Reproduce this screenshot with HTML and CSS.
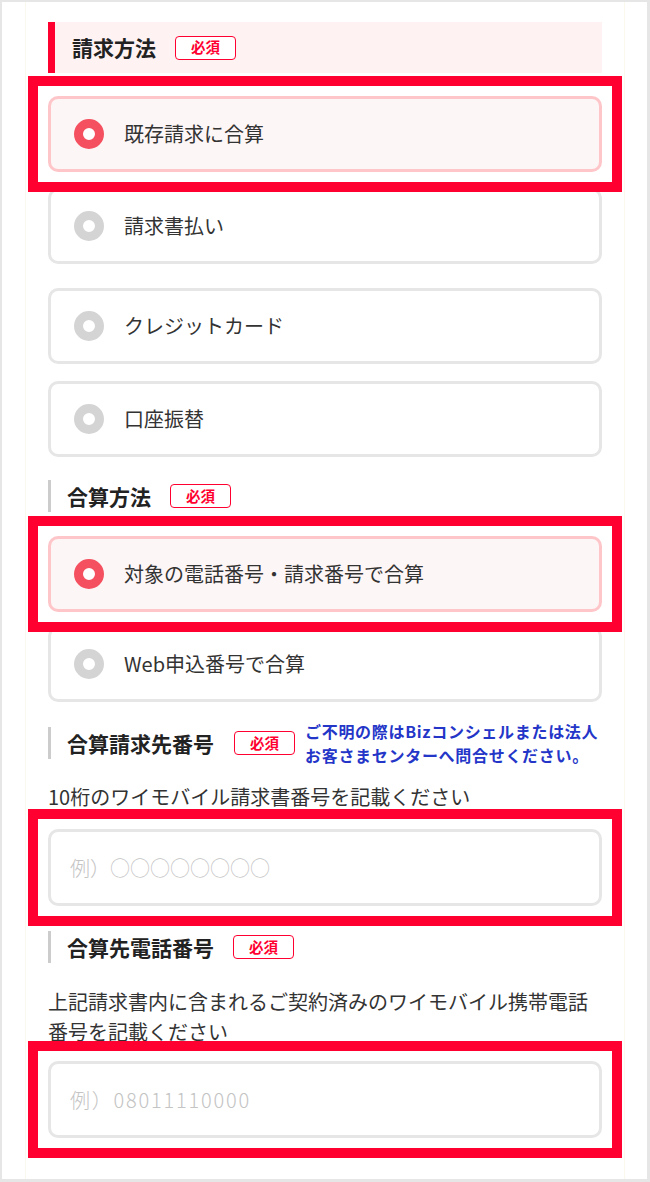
FILE: index.html
```html
<!DOCTYPE html>
<html lang="ja">
<head>
<meta charset="utf-8">
<title>請求方法</title>
<link rel="stylesheet" href="styles.css">
</head>
<body>
<div class="frame">
  <div class="panel">
    <div class="sec-main">
      <h2 class="sec-title">請求方法</h2>
      <span class="badge">必須</span>
    </div>

    <div class="opt opt--checked mark mt-23"><span class="radio"></span><span class="opt-label">既存請求に合算</span></div>
    <div class="opt mt-16"><span class="radio"></span><span class="opt-label">請求書払い</span></div>
    <div class="opt mt-24"><span class="radio"></span><span class="opt-label">クレジットカード</span></div>
    <div class="opt mt-17"><span class="radio"></span><span class="opt-label">口座振替</span></div>

    <div class="sec-sub mt-23">
      <h3 class="sub-title">合算方法</h3>
      <span class="badge">必須</span>
    </div>

    <div class="opt opt--checked mark mt-24"><span class="radio"></span><span class="opt-label">対象の電話番号・請求番号で合算</span></div>
    <div class="opt mt-14"><span class="radio"></span><span class="opt-label">Web申込番号で合算</span></div>

    <div class="sub-row mt-17">
      <h3 class="sub-title sub-title--bar">合算請求先番号</h3>
      <span class="badge">必須</span>
      <p class="note">ご不明の際はBizコンシェルまたは法人<br>お客さまセンターへ問合せください。</p>
    </div>
    <p class="desc mt-15">10桁のワイモバイル請求書番号を記載ください</p>
    <div class="field mark mt-17"><span class="placeholder">例）○○○○○○○○</span></div>

    <div class="sec-sub mt-25">
      <h3 class="sub-title">合算先電話番号</h3>
      <span class="badge">必須</span>
    </div>
    <p class="desc mt-24">上記請求書内に含まれるご契約済みのワイモバイル携帯電話番号を記載ください</p>
    <div class="field mark mt-14"><span class="placeholder placeholder--num">例）08011110000</span></div>
  </div>
</div>
</body>
</html>
```

FILE: styles.css
```css
* { box-sizing: border-box; }

html, body {
  margin: 0;
  padding: 0;
  background: #ffffff;
}

body {
  font-family: "Noto Sans CJK JP", "Noto Sans", sans-serif;
  color: #333333;
}

.frame {
  width: 650px;
  height: 1182px;
  border-style: solid;
  border-color: #e6e6e6;
  border-width: 2px 3px 3px 2px;
  overflow: hidden;
}

.panel {
  margin-left: 23px;
  width: 600px;
  height: 100%;
  border-left: 1px solid #fbf9ee;
  border-right: 1px solid #fbf9ee;
  padding: 20px 22px 0 22px;
}

.mt-14 { margin-top: 14px; }
.mt-15 { margin-top: 15px; }
.mt-16 { margin-top: 16px; }
.mt-17 { margin-top: 17px; }
.mt-23 { margin-top: 23px; }
.mt-24 { margin-top: 24px; }
.mt-25 { margin-top: 25px; }

/* section headers */
.sec-main {
  display: flex;
  align-items: center;
  height: 51px;
  background: #fff2f2;
  border-left: 7px solid #ff0030;
  padding-left: 17px;
}

.sec-title {
  margin: 0;
  font-size: 21px;
  font-weight: 700;
  color: #222222;
  line-height: 1;
  margin-right: 19px;
}

.sec-sub {
  display: flex;
  align-items: center;
  height: 32px;
  border-left: 3px solid #cccccc;
  padding-left: 16px;
}

.sub-row {
  display: flex;
  align-items: center;
  height: 48px;
}

.sub-title {
  margin: 0 19px 0 0;
  font-size: 21px;
  font-weight: 700;
  color: #222222;
  line-height: 1;
}

.sub-title--bar {
  display: flex;
  align-items: center;
  height: 32px;
  border-left: 3px solid #cccccc;
  padding-left: 16px;
  margin-right: 20px;
}

.badge {
  display: inline-flex;
  align-items: center;
  justify-content: center;
  width: 61px;
  height: 24px;
  border: 1.5px solid #ff0030;
  border-radius: 4px;
  color: #ff0030;
  font-size: 14.5px;
  font-weight: 700;
  line-height: 1;
  background: #ffffff;
}

.note {
  margin: 0 0 0 10px;
  font-size: 16px;
  font-weight: 700;
  line-height: 24px;
  letter-spacing: 0.7px;
  color: #2436c8;
  white-space: nowrap;
}

/* options */
.opt {
  display: flex;
  align-items: center;
  height: 76px;
  border: 3px solid #e6e6e6;
  border-radius: 10px;
  padding-left: 23px;
  background: #ffffff;
}

.opt--checked {
  background: #fdf6f6;
  border-color: #ffc6ca;
}

.radio {
  flex: none;
  width: 30px;
  height: 30px;
  border-radius: 50%;
  border: 9px solid #d4d4d4;
  background: #ffffff;
}

.opt--checked .radio {
  border-color: #f4505f;
}

.opt-label {
  margin-left: 20px;
  font-size: 20px;
  line-height: 1;
  color: #333333;
}

/* annotation marker (overlay frame) */
.mark {
  position: relative;
  z-index: 2;
}

.mark::after {
  content: "";
  position: absolute;
  top: -23px;
  left: -23px;
  right: -23px;
  bottom: -23px;
  border: 10px solid #ff0030;
  pointer-events: none;
}

/* description text */
.desc {
  margin-bottom: 0;
  font-size: 20px;
  line-height: 30px;
  color: #333333;
}

/* text fields */
.field {
  display: flex;
  align-items: center;
  height: 77px;
  border: 3px solid #e6e6e6;
  border-radius: 10px;
  padding-left: 19px;
  background: #ffffff;
}

.placeholder {
  font-size: 20px;
  font-weight: 300;
  color: #c4c4c4;
  line-height: 1;
}

.placeholder--num {
  letter-spacing: 1.8px;
}
```
